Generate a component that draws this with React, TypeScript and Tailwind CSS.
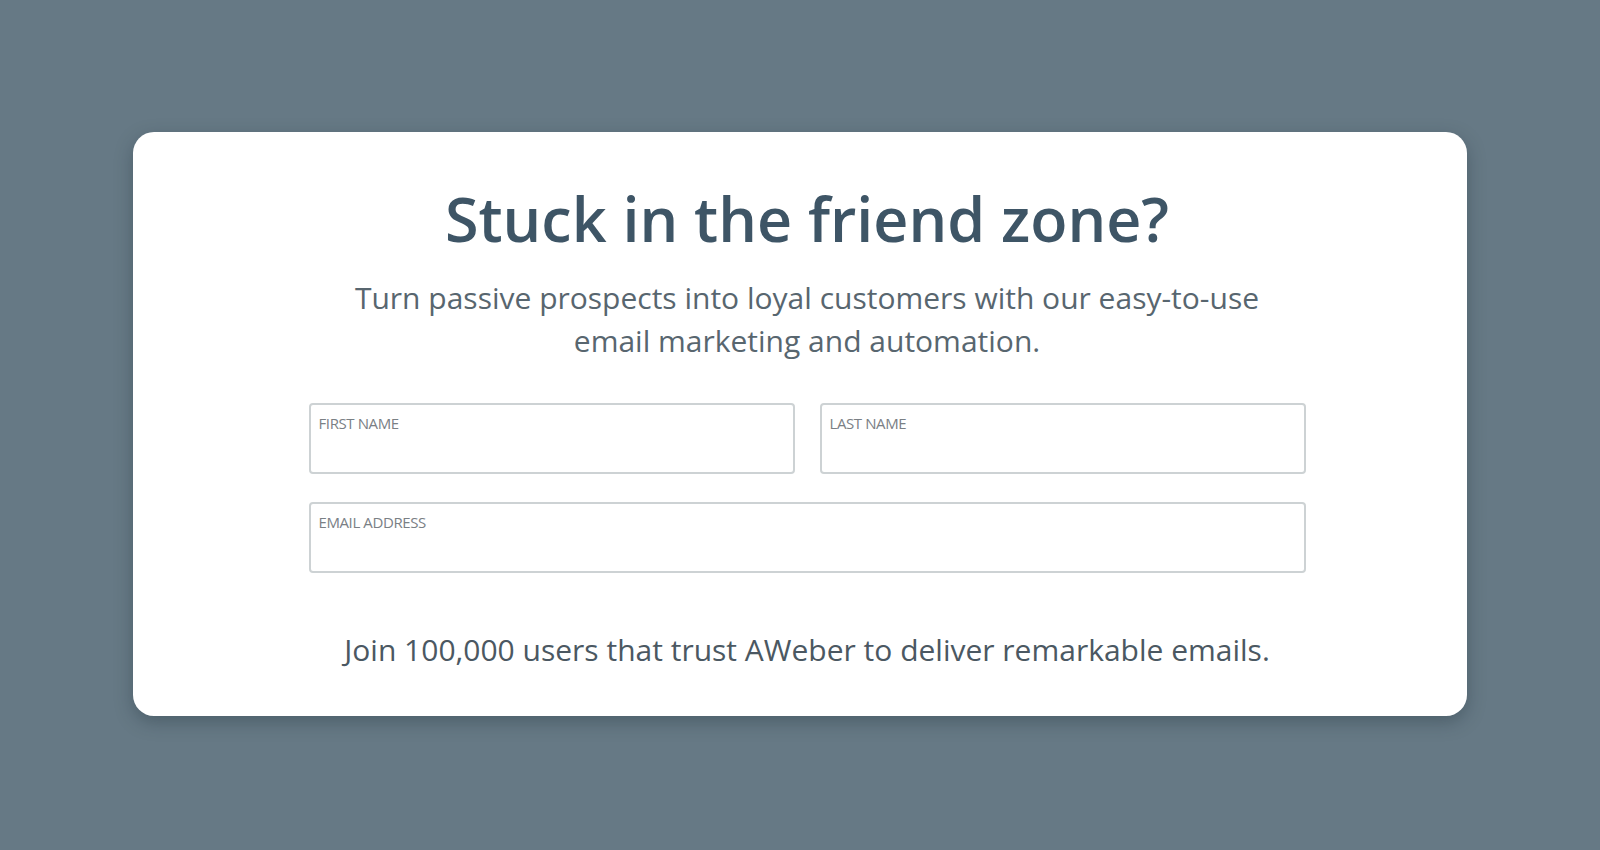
const Field = ({ label, className }: { label: string; className?: string }) => (
  <label
    className={`block h-[71px] rounded-[4px] border-2 border-[#cdd2d4] bg-white px-[8px] pt-[9px] ${className ?? ''}`}
  >
    <span className="block text-[15px] leading-[18px] uppercase tracking-[-0.4px] text-[#7a8085]">{label}</span>
    <input className="mt-1 w-full bg-transparent text-[15px] text-[#3f5566] outline-none" />
  </label>
);

export default function App() {
  return (
    <div
      className="min-h-[850px] w-full bg-[#667985] pt-[132px]"
      style={{ fontFamily: '"Open Sans", "Noto Sans", Arial, sans-serif' }}
    >
      <div className="mx-auto flex h-[584px] w-[1334px] flex-col items-center rounded-[21px] bg-white pl-[14px] pt-[52px] shadow-[0_6px_18px_rgba(30,45,55,0.35)]">
        <h1 className="text-[61px] leading-[70px] font-semibold text-[#3e5566]">
          Stuck in the friend zone?
        </h1>
        <p className="mt-[22px] w-[960px] text-center text-[30px] leading-[43px] text-[#58666f]">
          Turn passive prospects into loyal customers with our easy-to-use email marketing and automation.
        </p>
        <form className="mt-[41px] flex w-[997px] flex-col gap-[28px]">
          <div className="grid grid-cols-2 gap-[25px]">
            <Field label="First Name" />
            <Field label="Last Name" />
          </div>
          <Field label="Email Address" />
        </form>
        <p className="mt-[57px] text-[30px] leading-[40px] text-[#4b5862]">
          Join 100,000 users that trust AWeber to deliver remarkable emails.
        </p>
      </div>
    </div>
  );
}
